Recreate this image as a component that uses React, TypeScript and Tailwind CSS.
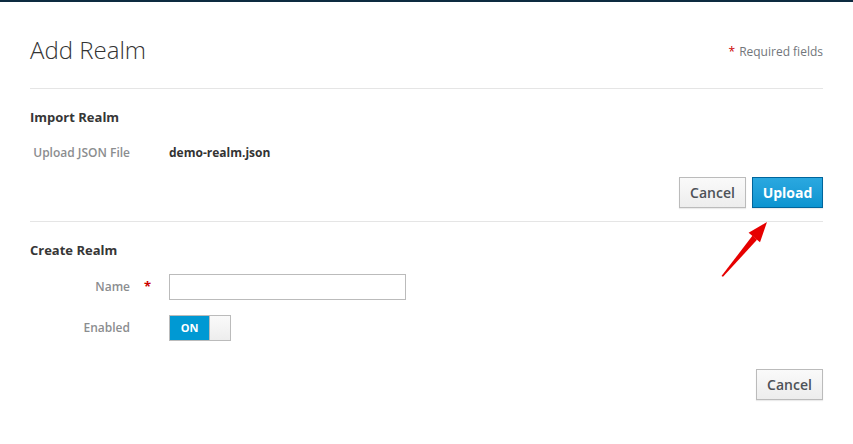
import React from 'react';

const labelCls = "w-[100px] text-right text-[12px] font-semibold text-[#8b8d8f]";

const App = () => {
  return (
    <div className="relative min-h-[444px] bg-white font-['Open_Sans',sans-serif] text-[#363636]">
      {/* top navbar edge */}
      <div className="h-[2px] bg-[#0d2b40]"></div>

      <div className="px-[30px]">
        {/* Header */}
        <div className="flex items-center justify-between pt-[32px] pb-[22px] border-b border-[#e5e5e5]">
          <h1 className="text-[24px] leading-[32px] font-light text-[#333]">Add Realm</h1>
          <span className="text-[12px] text-[#72767b] mt-[3px]">
            <span className="text-[#c00] mr-[4px]">*</span>Required fields
          </span>
        </div>

        {/* Import Realm */}
        <div className="border-b border-[#e5e5e5] pb-[13px]">
          <h2 className="mt-[18px] text-[13px] leading-[20px] font-bold text-[#363636]">Import Realm</h2>
          <div className="mt-[16px] flex items-center h-[20px]">
            <span className={labelCls}>Upload JSON File</span>
            <span className="ml-[39px] text-[12px] font-bold text-[#333]">demo-realm.json</span>
          </div>
          <div className="mt-[14px] flex justify-end gap-[6px]">
            <button className="h-[31px] w-[67px] border border-[#bbb] bg-gradient-to-b from-[#fafafa] to-[#ededed] text-[14px] font-semibold text-[#4d5258] shadow-[0_1px_1px_rgba(3,3,3,0.08)]">
              Cancel
            </button>
            <button className="h-[31px] w-[71px] border border-[#00659c] bg-gradient-to-b from-[#2aa8e0] to-[#0a94d0] text-[14px] font-bold text-white shadow-[0_1px_1px_rgba(3,3,3,0.08)]">
              Upload
            </button>
          </div>
        </div>

        {/* Create Realm */}
        <h2 className="mt-[18px] text-[13px] leading-[20px] font-bold text-[#363636]">Create Realm</h2>
        <div className="mt-[14px] flex items-center">
          <span className={labelCls}>Name</span>
          <span className="w-[39px] pl-[14px] text-[13px] font-bold text-[#c00]">*</span>
          <input className="h-[26px] w-[237px] border border-[#bbb] bg-white outline-none" />
        </div>
        <div className="mt-[15px] flex items-center">
          <span className={labelCls}>Enabled</span>
          <div className="ml-[39px] flex h-[26px] w-[62px] border border-[#bbb]">
            <div className="flex w-[39px] items-center justify-center bg-[#0099d3] text-[11px] font-bold text-white">ON</div>
            <div className="flex-1 border-l border-[#bbb] bg-gradient-to-b from-[#fafafa] to-[#ededed]"></div>
          </div>
        </div>

        <div className="mt-[28px] flex justify-end">
          <button className="h-[31px] w-[67px] border border-[#bbb] bg-gradient-to-b from-[#fafafa] to-[#ededed] text-[14px] font-semibold text-[#4d5258] shadow-[0_1px_1px_rgba(3,3,3,0.08)]">
            Cancel
          </button>
        </div>
      </div>

      {/* red annotation arrow */}
      <svg className="absolute left-0 top-0 pointer-events-none" width="853" height="444" viewBox="0 0 853 444">
        <polygon points="721.5,276 723,276.8 757,239.8 752.6,235.6" fill="#e60000" />
        <polygon points="767,222 760,242.2 748.6,232.8" fill="#e60000" />
      </svg>
    </div>
  );
};

export default App;
